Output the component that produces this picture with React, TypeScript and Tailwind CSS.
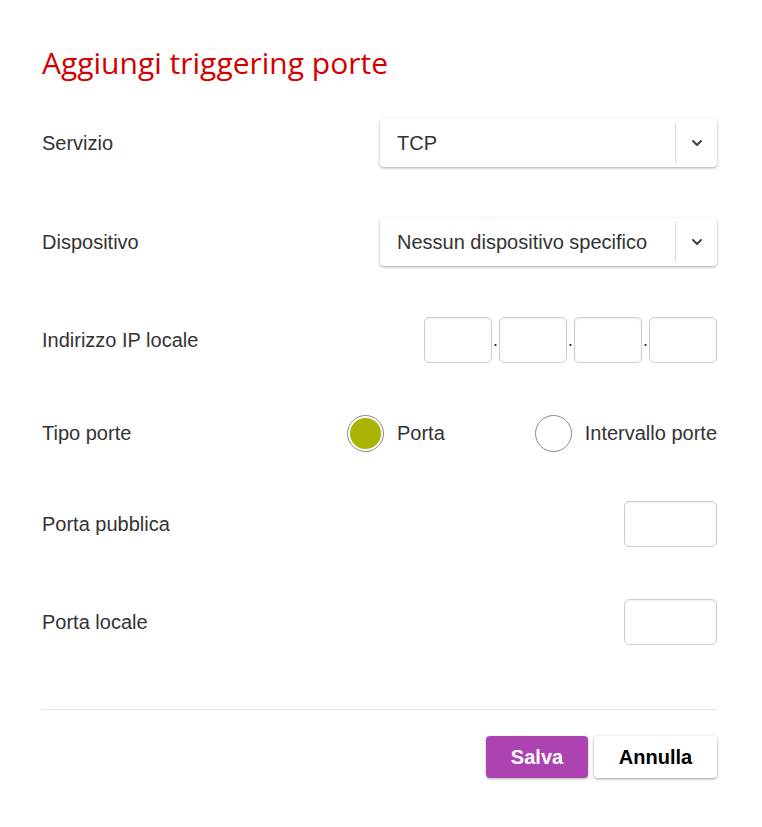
import { ChevronDown } from "lucide-react";

const label = "text-[20px] text-[#333333]";

function Select({ value }: { value: string }) {
  return (
    <div className="flex h-[48px] w-[337px] items-center rounded-[4px] bg-white shadow-[0_1px_3px_rgba(0,0,0,0.35)]">
      <span className="flex-1 pl-[17px] text-[20px] text-[#333333]">{value}</span>
      <span className="h-[40px] w-px bg-[#d6d6d6]" />
      <span className="flex w-[41px] items-center justify-center text-[#444444]">
        <ChevronDown size={16} strokeWidth={3} />
      </span>
    </div>
  );
}

function Box({ w }: { w: string }) {
  return (
    <div
      className={`${w} h-[46px] rounded-[5px] border border-[#cfcfcf] bg-white shadow-[inset_0_1px_2px_rgba(0,0,0,0.08)]`}
    />
  );
}

function Radio({ checked, text }: { checked: boolean; text: string }) {
  return (
    <div className="flex items-center gap-[13px]">
      <span className="flex h-[37px] w-[37px] items-center justify-center rounded-full border border-[#8a8a8a] bg-white">
        {checked && <span className="h-[31px] w-[31px] rounded-full bg-[#a8b400]" />}
      </span>
      <span className="text-[20px] text-[#333333]">{text}</span>
    </div>
  );
}

export default function App() {
  return (
    <div
      className="min-h-[827px] w-[762px] bg-white pl-[42px] pr-[45px] pt-[43px]"
      style={{ fontFamily: "'Liberation Sans', Arial, sans-serif" }}
    >
      <h1
        className="text-[30px] leading-[40px] text-[#d40000]"
        style={{ fontFamily: "'Open Sans', 'Noto Sans', sans-serif" }}
      >
        Aggiungi triggering porte
      </h1>

      <div className="mt-[36px] flex h-[48px] items-center justify-between">
        <span className={label}>Servizio</span>
        <Select value="TCP" />
      </div>

      <div className="mt-[51px] flex h-[48px] items-center justify-between">
        <span className={label}>Dispositivo</span>
        <Select value="Nessun dispositivo specifico" />
      </div>

      <div className="mt-[50px] flex h-[48px] items-center justify-between">
        <span className={label}>Indirizzo IP locale</span>
        <div className="flex items-center">
          <Box w="w-[68px]" />
          <span className="w-[7px] pt-[4px] text-center text-[12px] font-bold leading-none text-[#222]">.</span>
          <Box w="w-[68px]" />
          <span className="w-[7px] pt-[4px] text-center text-[12px] font-bold leading-none text-[#222]">.</span>
          <Box w="w-[68px]" />
          <span className="w-[7px] pt-[4px] text-center text-[12px] font-bold leading-none text-[#222]">.</span>
          <Box w="w-[68px]" />
        </div>
      </div>

      <div className="mt-[45px] flex h-[48px] items-center">
        <span className={`${label} w-[305px]`}>Tipo porte</span>
        <div className="flex flex-1 items-center justify-between">
          <Radio checked text="Porta" />
          <Radio checked={false} text="Intervallo porte" />
        </div>
      </div>

      <div className="mt-[43px] flex h-[48px] items-center justify-between">
        <span className={label}>Porta pubblica</span>
        <Box w="w-[93px]" />
      </div>

      <div className="mt-[50px] flex h-[48px] items-center justify-between">
        <span className={label}>Porta locale</span>
        <Box w="w-[93px]" />
      </div>

      <div className="mt-[63px] h-px bg-[#e2e2e2]" />

      <div className="mt-[26px] flex justify-end gap-[6px]">
        <button className="h-[42px] w-[102px] rounded-[4px] bg-[#ad43b1] text-[20px] font-bold text-white shadow-[0_1px_3px_rgba(0,0,0,0.3)]">
          Salva
        </button>
        <button className="h-[42px] w-[123px] rounded-[4px] bg-white text-[20px] font-bold text-black shadow-[0_1px_3px_rgba(0,0,0,0.4)]">
          Annulla
        </button>
      </div>
    </div>
  );
}
